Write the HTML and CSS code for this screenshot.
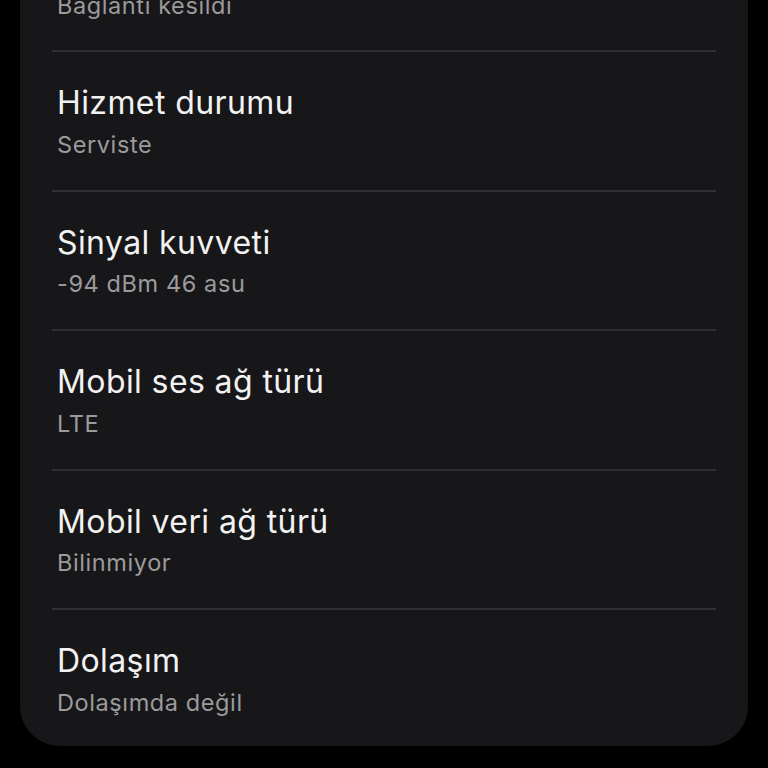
FILE: index.html
```html
<!DOCTYPE html>
<html lang="tr">
<head>
<meta charset="utf-8">
<link rel="stylesheet" href="styles.css">
</head>
<body>
<div class="card">
  <div class="first">
    <div class="sub">Bağlantı kesildi</div>
  </div>
  <div class="row">
    <div class="title">Hizmet durumu</div>
    <div class="sub">Serviste</div>
  </div>
  <div class="row">
    <div class="title">Sinyal kuvveti</div>
    <div class="sub">-94 dBm 46 asu</div>
  </div>
  <div class="row">
    <div class="title">Mobil ses ağ türü</div>
    <div class="sub">LTE</div>
  </div>
  <div class="row">
    <div class="title">Mobil veri ağ türü</div>
    <div class="sub">Bilinmiyor</div>
  </div>
  <div class="row last">
    <div class="title">Dolaşım</div>
    <div class="sub">Dolaşımda değil</div>
  </div>
</div>
</body>
</html>
```
FILE: styles.css
```css
html, body {
  margin: 0;
  padding: 0;
  background: #000;
  height: 768px;
  overflow: hidden;
}
body {
  font-family: Inter, Roboto, "Noto Sans", sans-serif;
}
.card {
  margin: -8px 20px 0 20px;
  background: #171719;
  border-radius: 0 0 40px 40px;
  padding: 0 32px;
}
.first {
  height: 58px;
  box-sizing: border-box;
  padding-left: 5px;
}
.row {
  height: 139.5px;
  box-sizing: border-box;
  border-top: 2px solid #2f2f31;
  padding: 33px 0 0 5px;
}
.row.last {
  height: 138px;
}
.title {
  color: #f2f2f2;
  font-size: 32px;
  line-height: 36px;
  letter-spacing: 0.4px;
}
.sub {
  color: #9b9b9d;
  font-size: 23.5px;
  line-height: 28px;
  letter-spacing: 0.6px;
  margin-top: 9.5px;
}
.first .sub {
  margin-top: 0;
}
```
